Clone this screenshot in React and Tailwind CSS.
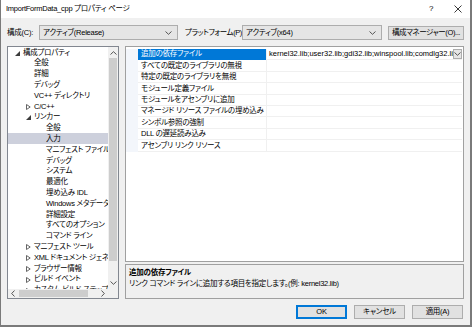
const tree = [
  { t: '構成プロパティ', lvl: 0, arrow: 'open' },
  { t: '全般', lvl: 1 },
  { t: '詳細', lvl: 1 },
  { t: 'デバッグ', lvl: 1 },
  { t: 'VC++ ディレクトリ', lvl: 1 },
  { t: 'C/C++', lvl: 1, arrow: 'closed' },
  { t: 'リンカー', lvl: 1, arrow: 'open' },
  { t: '全般', lvl: 2 },
  { t: '入力', lvl: 2, sel: true },
  { t: 'マニフェスト ファイル', lvl: 2 },
  { t: 'デバッグ', lvl: 2 },
  { t: 'システム', lvl: 2 },
  { t: '最適化', lvl: 2 },
  { t: '埋め込み IDL', lvl: 2 },
  { t: 'Windows メタデータ', lvl: 2 },
  { t: '詳細設定', lvl: 2 },
  { t: 'すべてのオプション', lvl: 2 },
  { t: 'コマンド ライン', lvl: 2 },
  { t: 'マニフェスト ツール', lvl: 1, arrow: 'closed' },
  { t: 'XML ドキュメント ジェネレーター', lvl: 1, arrow: 'closed' },
  { t: 'ブラウザー情報', lvl: 1, arrow: 'closed' },
  { t: 'ビルド イベント', lvl: 1, arrow: 'closed' },
  { t: 'カスタム ビルド ステップ', lvl: 1, arrow: 'closed' },
]

const props = [
  '追加の依存ファイル',
  'すべての既定のライブラリの無視',
  '特定の既定のライブラリを無視',
  'モジュール定義ファイル',
  'モジュールをアセンブリに追加',
  'マネージド リソース ファイルの埋め込み',
  'シンボル参照の強制',
  'DLL の遅延読み込み',
  'アセンブリ リンク リソース',
]

const indent = ['pl-[15px]', 'pl-[26px]', 'pl-[38px]']

function Arrow({ kind }) {
  if (kind === 'open') {
    return (
      <svg width="5" height="5" viewBox="0 0 5 5" className="absolute -left-[8px] top-[2px]">
        <path d="M5 0V5H0Z" fill="#3c3c3c" />
      </svg>
    )
  }
  return (
    <svg width="5" height="6" viewBox="0 0 5 6" className="absolute -left-[8px] top-[1.5px]">
      <path d="M0.5 0.5L4.2 3L0.5 5.5Z" fill="none" stroke="#555" strokeWidth="0.9" />
    </svg>
  )
}

function Chevron({ className = '' }) {
  return (
    <svg width="7" height="4" viewBox="0 0 7 4" className={`shrink-0 ${className}`}>
      <path d="M0.5 0.5L3.5 3.3L6.5 0.5" fill="none" stroke="#444" strokeWidth="0.9" />
    </svg>
  )
}

function Combo({ text, className = '' }) {
  return (
    <div className={`h-[15px] border border-[#adadad] bg-[#e5e5e5] flex items-center justify-between pl-[3px] pr-[5px] ${className}`}>
      <span>{text}</span>
      <Chevron />
    </div>
  )
}

function Btn({ children, primary }) {
  return (
    <div
      className={`w-[51px] h-[14px] flex items-center justify-center bg-[#e1e1e1] border ${
        primary ? 'border-[#0078d7] shadow-[inset_0_0_0_1px_#0078d7]' : 'border-[#adadad]'
      }`}
    >
      {children}
    </div>
  )
}

export default function App() {
  return (
    <div className="w-[472px] h-[327px] bg-[#f0f0f0] border-r-2 border-b-2 border-l border-[#7a7a7a] flex flex-col text-[7.5px] leading-none tracking-[-0.25px] text-black overflow-hidden whitespace-nowrap [font-feature-settings:'palt'] font-['Liberation_Sans','Noto_Sans_CJK_JP',sans-serif]">
      {/* title bar */}
      <div className="h-[18px] bg-white flex items-center pl-[5px] shrink-0">
        <span className="flex-1">ImportFormData_cpp プロパティ ページ</span>
        <span className="w-[10px] text-center mr-[18px] text-[8px]">?</span>
        <svg width="8" height="8" viewBox="0 0 8 8" className="mr-[8px]">
          <path d="M0.5 0.5L7.5 7.5M7.5 0.5L0.5 7.5" stroke="#222" strokeWidth="0.9" />
        </svg>
      </div>

      <div className="flex-1 flex flex-col px-[6px]">
        {/* config row */}
        <div className="flex items-center mt-[7px] h-[15px]">
          <span className="w-[32px]">構成(C):</span>
          <Combo text="アクティブ(Release)" className="w-[139px]" />
          <span className="ml-[7px] w-[57px] tracking-[-0.4px]">プラットフォーム(P):</span>
          <Combo text="アクティブ(x64)" className="w-[140px]" />
          <div className="ml-[6px] w-[76px] h-[14px] bg-[#e1e1e1] border border-[#adadad] flex items-center justify-center tracking-[-0.4px]">
            構成マネージャー(O)...
          </div>
        </div>

        {/* main */}
        <div className="flex mt-[6px] gap-[6px] h-[253px]">
          {/* tree */}
          <div className="w-[112px] shrink-0 border border-[#828790] bg-white flex flex-col">
            <div className="flex flex-1 min-h-0">
              <div className="flex-1 overflow-hidden">
                {tree.map((r, i) => (
                  <div
                    key={i}
                    className={`h-[10.8px] flex items-center ${indent[r.lvl]} ${r.sel ? 'bg-[#cdd0dc]' : ''}`}
                  >
                    <span className="relative">
                      {r.arrow && <Arrow kind={r.arrow} />}
                      {r.t}
                    </span>
                  </div>
                ))}
              </div>
              <div className="w-[10px] bg-[#f0f0f0] flex flex-col items-center">
                <svg width="7" height="4" viewBox="0 0 7 4" className="mt-[4px]">
                  <path d="M0.5 3.5L3.5 0.7L6.5 3.5" fill="none" stroke="#444" strokeWidth="0.9" />
                </svg>
                <div className="w-[8px] bg-[#cdcdcd] mt-[3px] h-[203px]" />
                <div className="flex-1" />
                <Chevron className="mb-[4px]" />
              </div>
            </div>
            <div className="h-[9px] flex">
              <div className="flex-1 bg-[#f0f0f0] flex items-center">
                <svg width="4" height="7" viewBox="0 0 4 7" className="ml-[3px]">
                  <path d="M3.5 0.5L0.7 3.5L3.5 6.5" fill="none" stroke="#444" strokeWidth="0.9" />
                </svg>
                <div className="ml-[4px] w-[69px] h-[7px] bg-[#cdcdcd]" />
                <div className="flex-1" />
                <svg width="4" height="7" viewBox="0 0 4 7" className="mr-[3px]">
                  <path d="M0.5 0.5L3.3 3.5L0.5 6.5" fill="none" stroke="#444" strokeWidth="0.9" />
                </svg>
              </div>
              <div className="w-[10px] bg-[#f0f0f0]" />
            </div>
          </div>

          {/* right */}
          <div className="w-[339px] min-w-0 flex flex-col">
            <div className="h-[216px] border border-[#a0a0a0] bg-white pt-[2px] pr-[1px]">
              {props.map((p, i) => (
                <div key={i} className="flex h-[11.4px]">
                  <div className="w-[12px] shrink-0 bg-[#f3f6fb]" />
                  <div
                    className={`w-[128px] shrink-0 flex items-center pl-[3px] border-b overflow-hidden ${
                      i === 0 ? 'bg-[#0078d7] text-white border-[#0078d7]' : 'border-[#f0f0f0]'
                    }`}
                  >
                    {p}
                  </div>
                  <div className="flex-1 border-l border-b border-[#f0f0f0] flex items-center min-w-0 overflow-hidden">
                    {i === 0 && (
                      <>
                        <span className="flex-1 min-w-0 pl-[2px] overflow-hidden tracking-normal">
                          kernel32.lib;user32.lib;gdi32.lib;winspool.lib;comdlg32.lib;advapi32.lib
                        </span>
                        <div className="shrink-0 w-[9px] h-[10px] border border-[#adadad] bg-[#e5e5e5] flex items-center justify-center">
                          <Chevron />
                        </div>
                      </>
                    )}
                  </div>
                </div>
              ))}
            </div>
            <div className="mt-[2px] flex-1 border border-[#a0a0a0] bg-[#f0f0f0] pl-[3px] pt-[2px]">
              <div className="font-bold h-[11px] flex items-center">追加の依存ファイル</div>
              <div className="h-[11px] flex items-center">
                リンク コマンド ラインに追加する項目を指定します。(例: kernel32.lib)
              </div>
            </div>
          </div>
        </div>

        {/* buttons */}
        <div className="flex justify-end gap-[7px] mt-[6px] pr-[1px]">
          <Btn primary>OK</Btn>
          <Btn>キャンセル</Btn>
          <Btn>適用(A)</Btn>
        </div>
      </div>
    </div>
  )
}
